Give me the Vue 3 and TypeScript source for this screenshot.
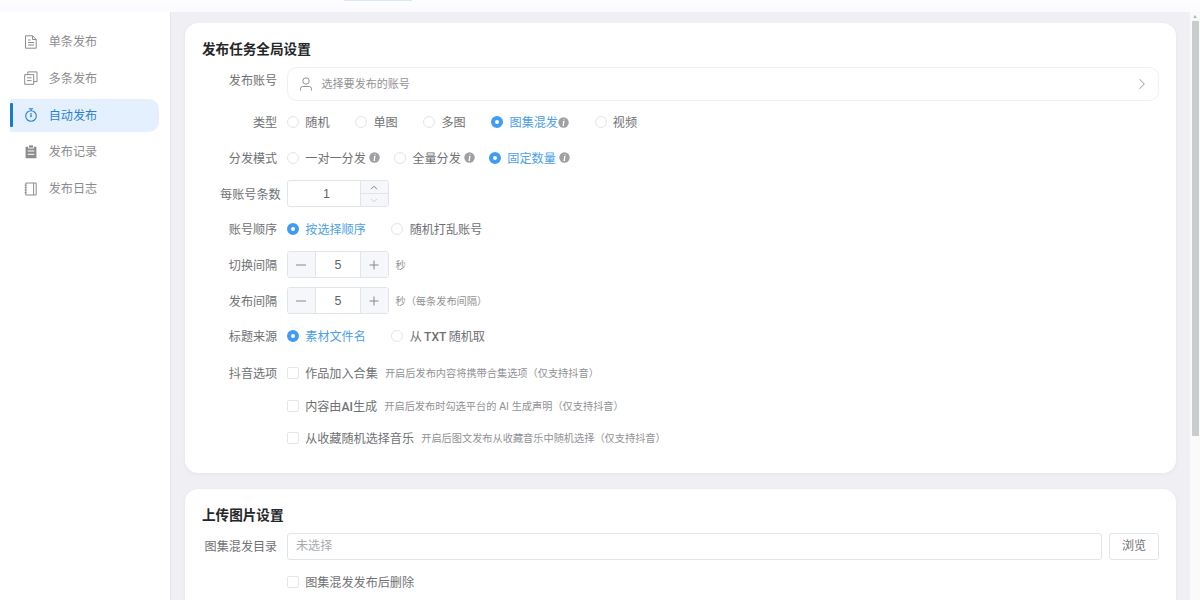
<script setup lang="ts">
import { ref } from 'vue'

interface NavItem { key: string; label: string }
interface Option { label: string; info?: boolean }
interface Check { label: string; hint: string }
interface Part { text: string; latin: boolean }

const navItems: NavItem[] = [
  { key: 'doc', label: '单条发布' },
  { key: 'copy', label: '多条发布' },
  { key: 'timer', label: '自动发布' },
  { key: 'clip', label: '发布记录' },
  { key: 'book', label: '发布日志' },
]
const activeNav = ref('timer')

const types: Option[] = [
  { label: '随机' }, { label: '单图' }, { label: '多图' },
  { label: '图集混发', info: true }, { label: '视频' },
]
const modes: Option[] = [
  { label: '一对一分发', info: true }, { label: '全量分发', info: true }, { label: '固定数量', info: true },
]
const orders: Option[] = [{ label: '按选择顺序' }, { label: '随机打乱账号' }]
const sources: Option[] = [{ label: '素材文件名' }, { label: '从 TXT 随机取' }]

const type = ref('图集混发')
const mode = ref('固定数量')
const order = ref('按选择顺序')
const source = ref('素材文件名')
const perAccount = ref(1)
const switchGap = ref(5)
const publishGap = ref(5)

const checks: Check[] = [
  { label: '作品加入合集', hint: '开启后发布内容将携带合集选项（仅支持抖音）' },
  { label: '内容由AI生成', hint: '开启后发布时勾选平台的 AI 生成声明（仅支持抖音）' },
  { label: '从收藏随机选择音乐', hint: '开启后图文发布从收藏音乐中随机选择（仅支持抖音）' },
]

// Latin runs are set in a medium weight next to regular Chinese text.
function parts(label: string): Part[] {
  return label
    .split(/([A-Za-z]+)/)
    .filter((t) => t.length > 0)
    .map((t) => ({ text: t, latin: /^[A-Za-z]/.test(t) }))
}
</script>

<template>
  <div class="app">
    <header class="topbar"><span class="top-tab"></span></header>
    <div class="body">
      <aside class="side">
        <div v-for="n in navItems" :key="n.key" class="nav" :class="{ active: n.key === activeNav }" @click="activeNav = n.key">
          <svg class="nav-icon" viewBox="0 0 14 14" fill="none" stroke="currentColor" stroke-width="1">
            <template v-if="n.key === 'doc'">
              <path d="M1.5 .8h7l3.7 3.7v8.7H1.5zM8.5 .8v3.7h3.7M4 5h2.5M4 7.5h6M4 10h6" />
            </template>
            <template v-else-if="n.key === 'copy'">
              <path d="M.7 3.6h9v9.7h-9zM3.8 3.6V.9h9.2v9.7H9.7M3 6.8h4.6M3 9.6h4.6" />
            </template>
            <template v-else-if="n.key === 'timer'">
              <circle cx="7" cy="8" r="5.3" stroke-width="1.1" />
              <path d="M4.8 .8h4.4M7 .8v2M7 5v3.4" stroke-width="1.1" />
              <circle cx="7" cy="8.5" r=".8" fill="currentColor" stroke="none" />
            </template>
            <template v-else-if="n.key === 'clip'">
              <path d="M1.6 1.8h2.6v1.6h5.6V1.8h2.6v11.4H1.6z" fill="currentColor" stroke="none" />
              <path d="M5 .4h4v2.2H5z" fill="currentColor" stroke="none" />
              <path d="M3.7 6h6.6M3.7 9.3h6.6" stroke="#fff" />
            </template>
            <template v-else>
              <path d="M1.8 1h10.4v12H1.8zM9.6 1v12" />
              <path d="M.6 3.2h2M.6 5.7h2M.6 8.2h2M.6 10.7h2" />
            </template>
          </svg>
          <span class="nav-text">{{ n.label }}</span>
        </div>
      </aside>

      <main class="main">
        <section class="card card-global">
          <h2 class="title">发布任务全局设置</h2>
          <div class="row row-account">
            <span class="label">发布账号</span>
            <div class="account">
              <svg class="user" viewBox="0 0 14 14" fill="none" stroke="currentColor">
                <circle cx="7" cy="4" r="3.2" />
                <path d="M1.5 13.5v-1.7a2.3 2.3 0 0 1 2.3-2.3h6.4a2.3 2.3 0 0 1 2.3 2.3v1.7" />
              </svg>
              <span class="account-text">选择要发布的账号</span>
              <svg class="chev" viewBox="0 0 8 12" fill="none" stroke="currentColor"><path d="M1.5 1.2 6.3 6 1.5 10.8" /></svg>
            </div>
          </div>

          <div class="row">
            <span class="label">类型</span>
            <div class="options">
              <label v-for="o in types" :key="o.label" class="radio" :class="{ on: o.label === type }" @click="type = o.label">
                <i class="dot"></i><span class="text">{{ o.label }}</span>
                <svg v-if="o.info" class="info tight" viewBox="0 0 11 11"><circle cx="5.5" cy="5.5" r="5.2" /><path d="M6.2 2.3 6 3.2M5 4.7h.8L5.2 8.3h.8" /></svg>
              </label>
            </div>
          </div>

          <div class="row">
            <span class="label">分发模式</span>
            <div class="options compact">
              <label v-for="o in modes" :key="o.label" class="radio" :class="{ on: o.label === mode }" @click="mode = o.label">
                <i class="dot"></i><span class="text">{{ o.label }}</span>
                <svg class="info" viewBox="0 0 11 11"><circle cx="5.5" cy="5.5" r="5.2" /><path d="M6.2 2.3 6 3.2M5 4.7h.8L5.2 8.3h.8" /></svg>
              </label>
            </div>
          </div>

          <div class="row">
            <span class="label wide">每账号条数</span>
            <div class="number">
              <span class="value first">{{ perAccount }}</span>
              <div class="stack">
                <button class="half" @click="perAccount++"><svg viewBox="0 0 8 5"><path d="M1 4.2 4 1.2 7 4.2" /></svg></button>
                <button class="half off"><svg viewBox="0 0 8 5"><path d="M1 .8 4 3.8 7 .8" /></svg></button>
              </div>
            </div>
          </div>

          <div class="row">
            <span class="label">账号顺序</span>
            <div class="options">
              <label v-for="o in orders" :key="o.label" class="radio" :class="{ on: o.label === order }" @click="order = o.label">
                <i class="dot"></i><span class="text">{{ o.label }}</span>
              </label>
            </div>
          </div>

          <div class="row">
            <span class="label">切换间隔</span>
            <div class="number">
              <button class="step left" @click="switchGap--"><svg viewBox="0 0 10 10"><path d="M0 5h10" /></svg></button>
              <span class="value">{{ switchGap }}</span>
              <button class="step right" @click="switchGap++"><svg viewBox="0 0 10 10"><path d="M.5 5h9M5 .5v9" /></svg></button>
            </div>
            <span class="hint unit">秒</span>
          </div>

          <div class="row">
            <span class="label">发布间隔</span>
            <div class="number">
              <button class="step left" @click="publishGap--"><svg viewBox="0 0 10 10"><path d="M0 5h10" /></svg></button>
              <span class="value">{{ publishGap }}</span>
              <button class="step right" @click="publishGap++"><svg viewBox="0 0 10 10"><path d="M.5 5h9M5 .5v9" /></svg></button>
            </div>
            <span class="hint unit">秒（每条发布间隔）</span>
          </div>

          <div class="row">
            <span class="label">标题来源</span>
            <div class="options">
              <label v-for="o in sources" :key="o.label" class="radio" :class="{ on: o.label === source }" @click="source = o.label">
                <i class="dot"></i><span class="text"><span v-for="(p, i) in parts(o.label)" :key="i" :class="{ latin: p.latin }">{{ p.text }}</span></span>
              </label>
            </div>
          </div>

          <div class="row row-checks">
            <span class="label">抖音选项</span>
            <div class="checks">
              <label v-for="c in checks" :key="c.label" class="check">
                <i class="box"></i><span class="text"><span v-for="(p, i) in parts(c.label)" :key="i" :class="{ latin: p.latin }">{{ p.text }}</span></span><span class="hint">{{ c.hint }}</span>
              </label>
            </div>
          </div>
        </section>

        <section class="card card-upload">
          <h2 class="title">上传图片设置</h2>
          <div class="row row-dir">
            <span class="label">图集混发目录</span>
            <div class="input">未选择</div>
            <button class="browse">浏览</button>
          </div>
          <div class="row row-delete">
            <span class="label"></span>
            <label class="check"><i class="box"></i><span class="text">图集混发发布后删除</span></label>
          </div>
        </section>
      </main>

      <div class="scroll">
        <i class="arrow"></i>
        <i class="thumb"></i>
      </div>
    </div>
  </div>
</template>

<style>
body { overflow: hidden; }
</style>

<style scoped>
* { box-sizing: border-box; }
.app {
  width: 1200px;
  height: 600px;
  overflow: hidden;
  display: flex;
  flex-direction: column;
  background: #fff;
  color: #707174;
  font: 12.1px/18px "Liberation Sans", "Noto Sans CJK SC", sans-serif;
  white-space: nowrap;
}
button { font: inherit; color: inherit; padding: 0; cursor: pointer; }
.topbar { height: 12px; flex: none; background: linear-gradient(#fdfdfe, #fbfaff); }
.top-tab { display: block; width: 68px; height: 1px; margin-left: 344px; background: #d6e8fc; }
.body { flex: 1; min-height: 0; display: flex; }

.side {
  width: 171px;
  flex: none;
  padding: 13px 11px 0 10px;
  border-right: 1px solid #e4e4e7;
  display: flex;
  flex-direction: column;
  gap: 3.8px;
}
.nav {
  position: relative;
  height: 33px;
  flex: none;
  display: flex;
  align-items: center;
  gap: 10.7px;
  padding-left: 14px;
  color: #8c8c8e;
  border-radius: 2px 10px 10px 2px;
}
.nav.active { background: #e5f0fe; color: #2583d6; }
.nav.active::before {
  content: "";
  position: absolute;
  left: 0;
  top: 4.5px;
  width: 3px;
  height: 23.5px;
  border-radius: 1px;
  background: #147cd4;
}
.nav-icon { width: 14px; height: 14px; flex: none; }
.nav-text { padding-top: 1px; }

.main {
  flex: 1;
  min-width: 0;
  padding: 11px 14px 0;
  background: #f0f0f4;
  display: flex;
  flex-direction: column;
  gap: 16px;
}
.card {
  flex: none;
  background: #fff;
  border-radius: 13px;
  padding: 17px 17px 0;
  box-shadow: 0 1px 4px rgba(30, 30, 60, 0.06);
}
.card-global { height: 450px; }
.card-upload { height: 150px; }
.title { margin: 0; height: 19px; font-size: 13.6px; line-height: 20px; font-weight: 700; color: #252628; }

.row { height: 35.7px; display: flex; align-items: center; }
.label { width: 75.2px; margin-right: 9.8px; padding-top: 2px; flex: none; text-align: right; }
.label.wide { width: 78.6px; margin-right: 6.4px; }
.row-account { height: 45.4px; align-items: flex-start; padding-top: 8px; }
.row-account .label { margin-top: 3px; }
.account {
  flex: 1;
  height: 34px;
  display: flex;
  align-items: center;
  padding: 0 12.5px 0 11px;
  border: 1px solid #f0f0f2;
  border-radius: 10px;
  color: #929395;
}
.user { width: 14px; height: 14px; margin-right: 8.5px; }
.account-text { flex: 1; font-size: 11.05px; }
.chev { width: 8px; height: 12px; }

.options { display: flex; align-items: center; gap: 25.6px; }
.options.compact { gap: 14.3px; }
.radio, .check { display: flex; align-items: center; }
.text { padding-top: 2px; word-spacing: -1.1px; }
.latin { font-family: Roboto, "Liberation Sans", sans-serif; font-weight: 500; }
.dot { width: 12px; height: 12px; margin-right: 6.3px; border: 1px solid #e3e5e9; border-radius: 50%; background: #fff; }
.radio.on { color: #4c9fe8; }
.radio.on .dot { border: 4px solid #409bf5; }
.info { width: 11px; height: 11px; margin-left: 3px; fill: #9fa0a3; }
.info.tight { margin-left: 0; }
.info path { fill: none; stroke: #fff; stroke-width: 1.2; }

.number {
  width: 102px;
  height: 27px;
  display: flex;
  border: 1px solid #e1e4ea;
  border-radius: 3px;
  overflow: hidden;
}
.value { flex: 1; font-size: 12.5px; line-height: 26px; text-align: center; color: #646569; }
.value.first { padding-left: 5px; }
.step { width: 28px; border: 0 solid #e1e4ea; background: #f5f7fa; display: flex; align-items: center; justify-content: center; }
.step.left { border-right-width: 1px; }
.step.right { border-left-width: 1px; }
.step svg { width: 10px; height: 10px; fill: none; stroke: #85878b; }
.stack { width: 28px; display: flex; flex-direction: column; border-left: 1px solid #e1e4ea; }
.half { flex: 1; border: 0; background: #f5f7fa; display: flex; align-items: center; justify-content: center; }
.half + .half { border-top: 1px solid #e1e4ea; }
.half svg { width: 8px; height: 5px; fill: none; stroke: #85878b; }
.half.off svg { stroke: #cfd2d8; }
.hint { padding-top: 2px; font-size: 10.2px; color: #919295; }
.unit { margin-left: 6.5px; }

.row-checks { height: auto; align-items: flex-start; padding-top: 2.8px; }
.row-checks .label { padding-top: 1px; line-height: 32.4px; }
.checks .check { height: 32.4px; }
.box { width: 12px; height: 12px; margin-right: 6.2px; border: 1px solid #e3e5e9; border-radius: 2px; background: #fff; }
.check .hint { margin-left: 7.2px; }

.row-dir { height: 42px; }
.input {
  flex: 1;
  height: 27px;
  padding-left: 8px;
  line-height: 25px;
  border: 1px solid #e1e4e8;
  border-radius: 3px;
  color: #a9abb0;
}
.browse { width: 50px; height: 27px; margin-left: 7px; border: 1px solid #e1e4e8; border-radius: 3px; background: #fff; }
.row-delete { height: 30.5px; }

.scroll { width: 10px; flex: none; background: #fafafa; display: flex; flex-direction: column; align-items: center; padding-top: 3px; }
.arrow { border: 2px solid transparent; border-bottom: 3px solid #b4b7b8; border-top: 0; margin-bottom: 3px; }
.thumb { width: 7px; height: 415px; background: #c9cdce; }
</style>
